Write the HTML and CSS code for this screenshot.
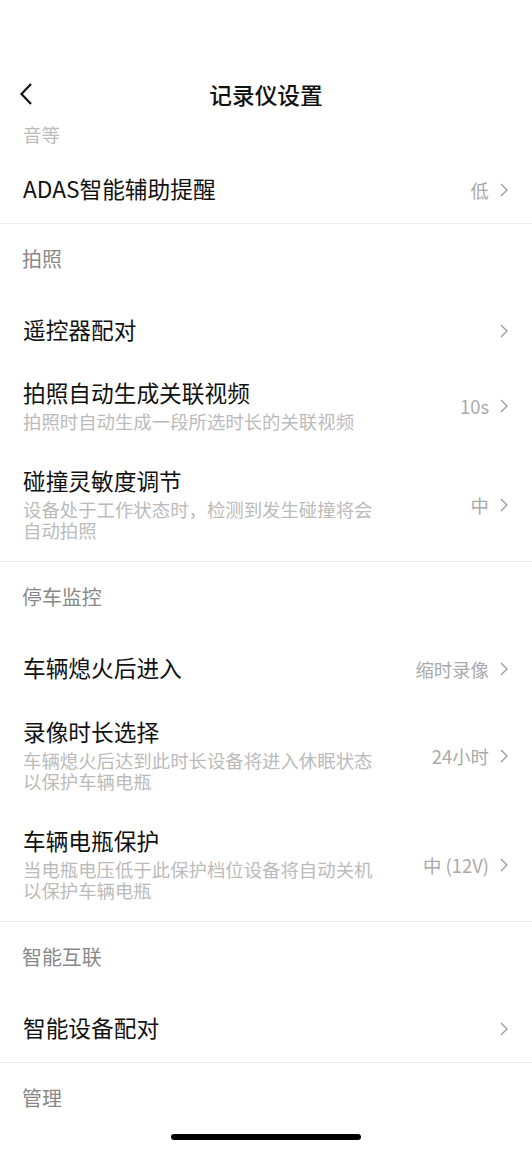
FILE: index.html
```html
<!DOCTYPE html>
<html lang="zh-CN">
<head>
  <meta charset="UTF-8">
  <title>记录仪设置</title>
  <link rel="stylesheet" href="styles.css">
</head>
<body>
  <div class="status-bar"></div>

  <header class="nav">
    <a class="back" href="#">
      <svg width="14" height="24" viewBox="0 0 14 24"><path d="M12 2 L2.5 12 L12 22" fill="none" stroke="#111" stroke-width="2.2"/></svg>
    </a>
    <h1 class="nav-title">记录仪设置</h1>
  </header>

  <div class="tail">音等</div>

  <section class="group">
    <div class="row">
      <div class="row-main">
        <div class="row-title">ADAS智能辅助提醒</div>
      </div>
      <div class="row-value">低<span class="chev"></span></div>
    </div>
  </section>

  <section class="group">
    <div class="group-title">拍照</div>
    <div class="row">
      <div class="row-main">
        <div class="row-title">遥控器配对</div>
      </div>
      <div class="row-value"><span class="chev"></span></div>
    </div>
    <div class="row">
      <div class="row-main">
        <div class="row-title">拍照自动生成关联视频</div>
        <div class="row-desc">拍照时自动生成一段所选时长的关联视频</div>
      </div>
      <div class="row-value">10s<span class="chev"></span></div>
    </div>
    <div class="row">
      <div class="row-main">
        <div class="row-title">碰撞灵敏度调节</div>
        <div class="row-desc">设备处于工作状态时，检测到发生碰撞将会自动拍照</div>
      </div>
      <div class="row-value">中<span class="chev"></span></div>
    </div>
  </section>

  <section class="group">
    <div class="group-title">停车监控</div>
    <div class="row">
      <div class="row-main">
        <div class="row-title">车辆熄火后进入</div>
      </div>
      <div class="row-value">缩时录像<span class="chev"></span></div>
    </div>
    <div class="row">
      <div class="row-main">
        <div class="row-title">录像时长选择</div>
        <div class="row-desc">车辆熄火后达到此时长设备将进入休眠状态以保护车辆电瓶</div>
      </div>
      <div class="row-value">24小时<span class="chev"></span></div>
    </div>
    <div class="row">
      <div class="row-main">
        <div class="row-title">车辆电瓶保护</div>
        <div class="row-desc">当电瓶电压低于此保护档位设备将自动关机以保护车辆电瓶</div>
      </div>
      <div class="row-value">中 (12V)<span class="chev"></span></div>
    </div>
  </section>

  <section class="group">
    <div class="group-title">智能互联</div>
    <div class="row">
      <div class="row-main">
        <div class="row-title">智能设备配对</div>
      </div>
      <div class="row-value"><span class="chev"></span></div>
    </div>
  </section>

  <section class="group last">
    <div class="group-title">管理</div>
  </section>

  <div class="home-bar"></div>
</body>
</html>
```

FILE: styles.css
```css
body {
  margin: 0;
  height: 1151px;
  overflow: hidden;
  position: relative;
  font-family: "Noto Sans CJK SC", "Noto Sans", sans-serif;
  background: #fff;
  color: #111;
}

.status-bar {
  height: 64px;
}

.nav {
  height: 60px;
  display: grid;
  grid-template-columns: 60px 1fr 60px;
  align-items: center;
}

.back {
  display: flex;
  padding-left: 19px;
}

.nav-title {
  margin: 0;
  text-align: center;
  font-size: 22.7px;
  font-weight: 500;
  color: #111;
}

.tail {
  padding: 0 23px 11.5px;
  font-size: 18.4px;
  line-height: 21px;
  color: #bbb;
}

.group {
  border-bottom: 1px solid #ededed;
  padding-bottom: 3px;
}

.group.last {
  border-bottom: none;
}

.group-title {
  padding: 21px 22px 25px;
  font-size: 19.9px;
  line-height: 28px;
  color: #888;
}

.row {
  display: flex;
  align-items: center;
  padding: 17.1px 24px 17.1px 23px;
}

.row-main {
  flex: 1;
}

.row-title {
  font-size: 22.7px;
  line-height: 29px;
  color: #111;
}

.row-desc {
  width: 356px;
  margin-top: 4px;
  font-size: 18.4px;
  line-height: 21px;
  color: #bbb;
}

.row-value {
  display: flex;
  align-items: center;
  gap: 11px;
  padding-top: 3px;
  font-size: 18.4px;
  color: #aaa;
  white-space: nowrap;
}

.chev {
  width: 8px;
  height: 14px;
  background: url("data:image/svg+xml;utf8,<svg xmlns='http://www.w3.org/2000/svg' width='8' height='14' viewBox='0 0 8 14'><path d='M1 1 L7 7 L1 13' fill='none' stroke='%23999' stroke-width='1.3'/></svg>") no-repeat center;
}

.home-bar {
  position: absolute;
  left: 171px;
  bottom: 11px;
  width: 190px;
  height: 6px;
  border-radius: 3px;
  background: #000;
}
```
